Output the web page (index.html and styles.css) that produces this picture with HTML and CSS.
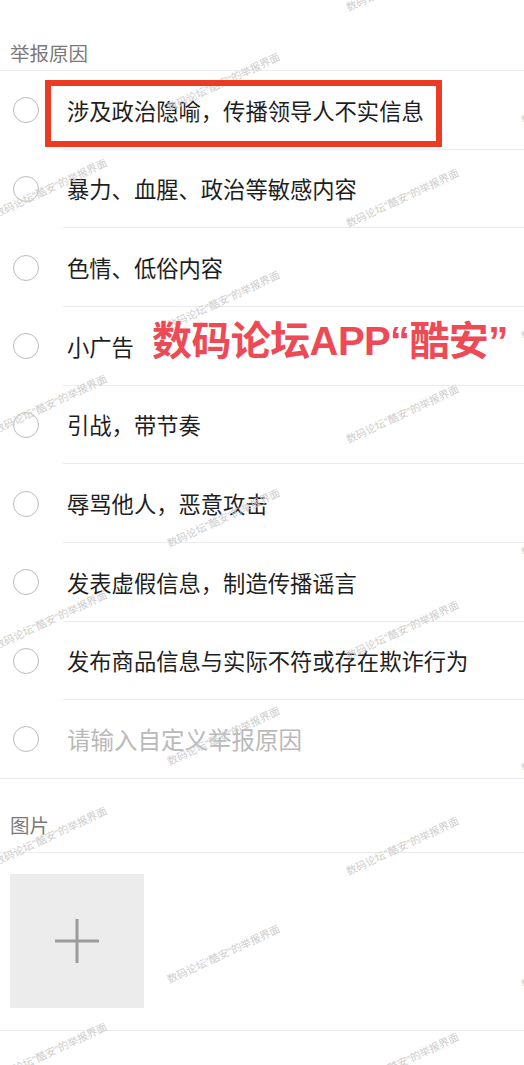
FILE: index.html
```html
<!DOCTYPE html>
<html lang="zh-CN">
<head>
<meta charset="utf-8">
<title>举报</title>
<link rel="stylesheet" href="styles.css">
</head>
<body>
<div class="page">
  <div class="section-title">举报原因</div>
  <ul class="reasons">
    <li class="reason"><span class="radio"></span><span class="label">涉及政治隐喻，传播领导人不实信息</span><span class="highlight"></span></li>
    <li class="reason"><span class="radio"></span><span class="label">暴力、血腥、政治等敏感内容</span></li>
    <li class="reason"><span class="radio"></span><span class="label">色情、低俗内容</span></li>
    <li class="reason"><span class="radio"></span><span class="label">小广告</span><span class="annot">数码论坛APP“酷安”</span></li>
    <li class="reason"><span class="radio"></span><span class="label">引战，带节奏</span></li>
    <li class="reason"><span class="radio"></span><span class="label">辱骂他人，恶意攻击</span></li>
    <li class="reason"><span class="radio"></span><span class="label">发表虚假信息，制造传播谣言</span></li>
    <li class="reason"><span class="radio"></span><span class="label">发布商品信息与实际不符或存在欺诈行为</span></li>
    <li class="reason custom"><span class="radio"></span><span class="label placeholder">请输入自定义举报原因</span></li>
  </ul>
  <div class="section-title pics-title">图片</div>
  <div class="images">
    <div class="add-box">
      <svg width="46" height="46" viewBox="0 0 46 46"><path d="M23 1V45M1 23H45" stroke="#9c9c9c" stroke-width="3" fill="none"/></svg>
    </div>
  </div>
  <div class="watermarks">
    <div class="wm-col c1">
      <div class="wm"><i>数码论坛"酷安"的举报界面</i></div>
      <div class="wm"><i>数码论坛"酷安"的举报界面</i></div>
      <div class="wm"><i>数码论坛"酷安"的举报界面</i></div>
      <div class="wm"><i>数码论坛"酷安"的举报界面</i></div>
      <div class="wm"><i>数码论坛"酷安"的举报界面</i></div>
      <div class="wm"><i>数码论坛"酷安"的举报界面</i></div>
    </div>
    <div class="wm-col c2">
      <div class="wm"><i>数码论坛"酷安"的举报界面</i></div>
      <div class="wm"><i>数码论坛"酷安"的举报界面</i></div>
      <div class="wm"><i>数码论坛"酷安"的举报界面</i></div>
      <div class="wm"><i>数码论坛"酷安"的举报界面</i></div>
      <div class="wm"><i>数码论坛"酷安"的举报界面</i></div>
    </div>
    <div class="wm-col c3">
      <div class="wm"><i>数码论坛"酷安"的举报界面</i></div>
      <div class="wm"><i>数码论坛"酷安"的举报界面</i></div>
      <div class="wm"><i>数码论坛"酷安"的举报界面</i></div>
      <div class="wm"><i>数码论坛"酷安"的举报界面</i></div>
      <div class="wm"><i>数码论坛"酷安"的举报界面</i></div>
      <div class="wm"><i>数码论坛"酷安"的举报界面</i></div>
    </div>
    <div class="wm-col c4">
      <div class="wm"><i>数码论坛"酷安"的举报界面</i></div>
      <div class="wm"><i>数码论坛"酷安"的举报界面</i></div>
      <div class="wm"><i>数码论坛"酷安"的举报界面</i></div>
      <div class="wm"><i>数码论坛"酷安"的举报界面</i></div>
      <div class="wm"><i>数码论坛"酷安"的举报界面</i></div>
    </div>
  </div>
</div>
</body>
</html>
```
FILE: styles.css
```css
html, body {
  margin: 0;
  padding: 0;
  background: #ffffff;
}
body {
  font-family: "Noto Sans CJK SC", "Noto Sans", sans-serif;
}
.page {
  position: relative;
  height: 1065px;
  overflow: hidden;
}
.section-title {
  font-size: 19.5px;
  line-height: 26px;
  color: #7a7a7a;
  padding: 40px 10px 4px;
  border-bottom: 1px solid #ececec;
}
.pics-title {
  padding-top: 33px;
  padding-bottom: 14px;
}
.reasons {
  list-style: none;
  margin: 0;
  padding: 0;
}
.reason {
  position: relative;
  display: flex;
  height: 78.67px;
  box-sizing: border-box;
}
.radio {
  align-self: center;
  flex: none;
  width: 26px;
  height: 26px;
  margin-left: 13px;
  border: 1.6px solid #bcbcbc;
  border-radius: 50%;
  box-sizing: border-box;
}
.label {
  flex: 1;
  display: flex;
  align-items: center;
  margin-left: 24px;
  padding-left: 4px;
  border-bottom: 1px solid #ececec;
  font-size: 22.3px;
  color: #1e1e1e;
  white-space: nowrap;
}
.reason.custom {
  border-bottom: 1px solid #ececec;
}
.reason.custom .label {
  border-bottom: none;
}
.placeholder {
  font-size: 23.5px;
  color: #b9b9b9;
}
.highlight {
  position: absolute;
  left: 45px;
  top: 9px;
  width: 397px;
  height: 67px;
  border: 6px solid #ec3b24;
  box-sizing: border-box;
  z-index: 3;
}
.annot {
  position: absolute;
  left: 152px;
  top: 14px;
  font-family: "Liberation Sans", "Noto Sans CJK SC", sans-serif;
  font-size: 40px;
  line-height: 40px;
  font-weight: 700;
  letter-spacing: -0.6px;
  color: #ee4a55;
  white-space: nowrap;
  z-index: 3;
}
.images {
  padding: 21px 10px 22px;
  border-bottom: 1px solid #ececec;
}
.add-box {
  width: 134px;
  height: 134px;
  background: #ececec;
  display: flex;
  align-items: center;
  justify-content: center;
}
.add-box svg {
  display: block;
}
.watermarks {
  position: absolute;
  inset: 0;
  pointer-events: none;
  z-index: 2;
}
.wm-col {
  position: absolute;
  width: 140px;
  display: flex;
  flex-direction: column;
}
.wm {
  height: 216px;
  display: flex;
  align-items: center;
  justify-content: center;
}
.wm i {
  font-style: normal;
  font-family: "Liberation Sans", "Noto Sans CJK SC", sans-serif;
  font-size: 10.5px;
  line-height: 12px;
  color: #cdcdcd;
  white-space: nowrap;
  transform: rotate(-25deg);
}
.c1 { left: -20px; top: -136px; }
.c2 { left: 153px; top: -27px; }
.c2 .wm { height: 218px; }
.c3 { left: 332px; top: -126px; }
.c4 { left: 507px; top: -13px; }
```
